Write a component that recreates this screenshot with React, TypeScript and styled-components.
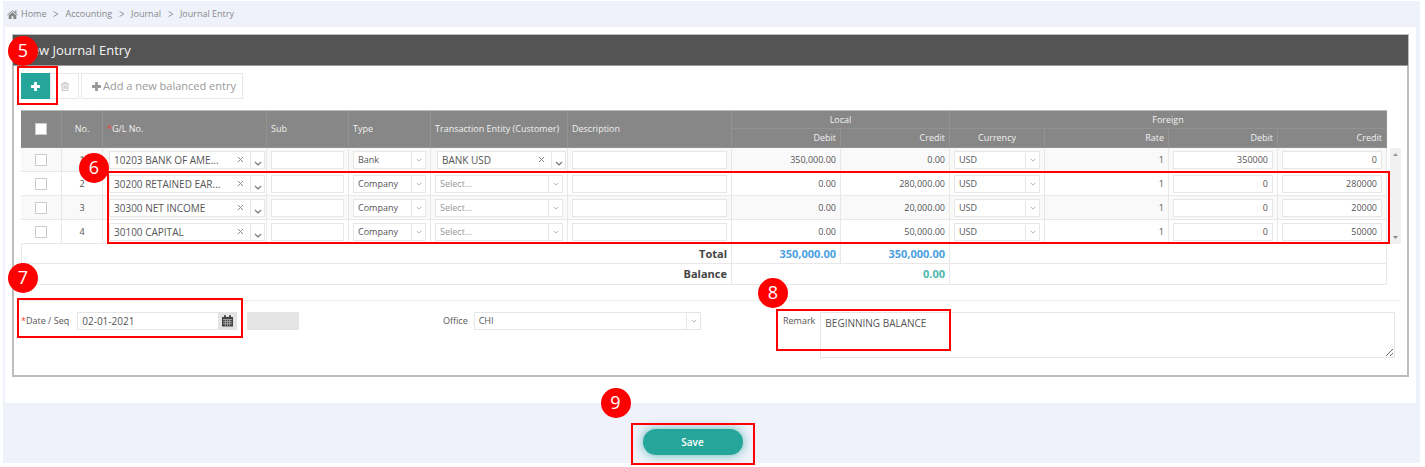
import React from "react";
import styled, { createGlobalStyle, css } from "styled-components";

const GlobalStyle = createGlobalStyle`
  *, *::before, *::after { box-sizing: border-box; }
  body {
    margin: 0;
    background: #fff;
    color: #555;
    font-family: "Open Sans", "Noto Sans", sans-serif;
    font-size: 9px;
    line-height: 14px;
  }
  button, input, select, textarea {
    margin: 0;
    font: inherit;
    color: inherit;
  }
`;

const Page = styled.div`
  margin: 1px 5px 4px 3px;
  background: #eff2fb;
`;

const Breadcrumb = styled.nav`
  display: flex;
  align-items: center;
  height: 26px;
  padding-left: 4px;
  color: #888;
`;

const Crumb = styled.a`
  display: flex;
  align-items: center;
  gap: 3px;
  color: inherit;
  text-decoration: none;
`;

const CrumbArrow = styled.svg`
  width: 6px;
  height: 6px;
  margin: 0 6px 0 7px;
  fill: none;
  stroke: #999;
`;

const Sheet = styled.main`
  margin: 0 4px 0 2px;
  padding: 7px 7px 26px;
  background: #fff;
`;

const Panel = styled.section`
  border: 2px solid #bdbdbd;
  border-top-width: 1px;
`;

const PanelTitle = styled.h1`
  margin: 0 -1px;
  height: 31px;
  padding: 0 9px;
  border-bottom: 1px solid #999;
  background: #545454;
  color: #f4f4f4;
  font-size: 13px;
  font-weight: 400;
  line-height: 30px;
`;

const PanelBody = styled.div`
  padding: 7px 6px 17px 7px;
`;

const Toolbar = styled.div`
  display: flex;
  position: relative;
  margin-bottom: 11px;
`;

const ToolButton = styled.button<{ $primary?: boolean; $wide?: boolean }>`
  display: flex;
  align-items: center;
  justify-content: center;
  gap: 2px;
  width: ${(p) => (p.$wide ? "auto" : "29px")};
  height: 26px;
  margin-left: ${(p) => (p.$wide ? "2px" : "0")};
  padding: ${(p) => (p.$wide ? "0 6px 0 10px" : "0")};
  border: 1px solid ${(p) => (p.$primary ? "#26a69a" : "#e8e8e8")};
  background: ${(p) => (p.$primary ? "#26a69a" : "#fff")};
  color: ${(p) => (p.$primary ? "#fff" : "#999")};
  font-size: 11px;
`;

const Grid = styled.div`
  display: flex;
  position: relative;
  gap: 3px;
`;

const Table = styled.table`
  flex: 1;
  min-width: 0;
  table-layout: fixed;
  border-collapse: separate;
  border-spacing: 0;
  border-top: 1px solid #bbb;
`;

const HeadCell = styled.th<{ $align?: string; $lower?: boolean }>`
  height: ${(p) => (p.$lower ? "19px" : "18px")};
  padding: 0 4px;
  border-right: 1px solid #929292;
  border-bottom: 1px solid #929292;
  background: #878787;
  color: #f0f0f0;
  font-weight: 400;
  text-align: ${(p) => p.$align || "left"};
  white-space: nowrap;
`;

const Row = styled.tr`
  background: #fff;
  &:nth-child(odd) { background: #f9f9f9; }
`;

const Cell = styled.td<{ $align?: string; $field?: "plain" | "clearable" }>`
  height: 24px;
  padding: ${(p) => (p.$field === "clearable" ? "0 1px 0 6px" : "0 4px")};
  border-right: 1px solid #e8e8e8;
  border-bottom: 1px solid #e8e8e8;
  text-align: ${(p) => p.$align || "left"};
  line-height: 12px;
`;

const SumCell = styled.td<{ $color?: string; $last?: boolean }>`
  height: ${(p) => (p.$last ? "21px" : "20px")};
  padding: 0 4px;
  border-right: 1px solid #e8e8e8;
  border-bottom: 1px solid #e8e8e8;
  background: #fff;
  color: ${(p) => p.$color || "#444"};
  font-size: 11px;
  font-weight: 700;
  text-align: right;
`;

const SumLabel = styled(SumCell)`
  border-left: 1px solid #e8e8e8;
`;

const Tick = styled.input.attrs({ type: "checkbox" })`
  appearance: none;
  display: block;
  width: 12px;
  height: 12px;
  margin: 0 auto;
  border: 1px solid #ccc;
  background: #fff;
`;

const fieldBox = css`
  border: 1px solid #e6e6e6;
  border-radius: 0;
  background: #fff;
  outline: none;
`;

const TextInput = styled.input<{ $right?: boolean }>`
  ${fieldBox}
  display: block;
  width: 100%;
  height: 18px;
  padding: 0 4px;
  text-align: ${(p) => (p.$right ? "right" : "left")};
`;

const SelectBox = styled.div<{ $muted?: boolean }>`
  ${fieldBox}
  display: flex;
  width: 100%;
  height: 18px;
  color: ${(p) => (p.$muted ? "#999" : "inherit")};
`;

const NativeSelect = styled.select<{ $large?: boolean }>`
  appearance: none;
  flex: 1;
  min-width: 0;
  height: 16px;
  padding: 0 0 0 4px;
  border: 0;
  background: transparent;
  font-size: ${(p) => (p.$large ? "10px" : "9px")};
  outline: none;
`;

const ClearButton = styled.button`
  display: flex;
  align-items: center;
  justify-content: center;
  width: 19px;
  height: 16px;
  padding: 0;
  border: 0;
  background: transparent;
`;

const ArrowSlot = styled.span<{ $low?: boolean }>`
  display: flex;
  align-items: ${(p) => (p.$low ? "flex-end" : "center")};
  justify-content: center;
  width: 14px;
  height: 16px;
  padding-bottom: ${(p) => (p.$low ? "2px" : "0")};
  border-left: 1px solid #e6e6e6;
`;

const ScrollTrack = styled.div`
  display: flex;
  flex-direction: column;
  justify-content: space-between;
  align-items: center;
  width: 11px;
  height: 96px;
  margin-top: 38px;
  padding: 5px 0;
  background: #f1f1f1;
`;

const Required = styled.span`
  color: #f44336;
`;

const Divider = styled.hr`
  margin: 15px 0 11px;
  border: 0;
  border-top: 1px solid #eee;
`;

const Form = styled.div`
  display: grid;
  grid-template-columns: 422fr 340fr 612fr;
  padding-right: 6px;
`;

const FormItem = styled.div<{ $trail?: number }>`
  display: flex;
  align-items: flex-start;
  position: relative;
  padding-right: ${(p) => p.$trail || 0}px;
`;

const Label = styled.label<{ $gap: number }>`
  flex: none;
  margin-right: ${(p) => p.$gap}px;
  line-height: 17px;
`;

const DateInput = styled(TextInput)`
  width: 141px;
  border-right: 0;
  font-size: 10px;
`;

const CalendarButton = styled.button`
  display: flex;
  align-items: center;
  justify-content: center;
  width: 19px;
  height: 18px;
  padding: 0;
  border: 0;
  background: #e4e4e4;
`;

const SeqInput = styled(TextInput)`
  width: 52px;
  margin-left: 10px;
  border-color: #e4e4e4;
  background: #e4e4e4;
`;

const RemarkArea = styled.textarea`
  ${fieldBox}
  flex: 1;
  min-width: 0;
  height: 46px;
  padding: 3px 4px;
  font-size: 10px;
  resize: vertical;
`;

const Footer = styled.footer`
  display: flex;
  justify-content: center;
  padding: 26px 38px 8px 0;
`;

const SaveWrap = styled.div`
  position: relative;
`;

const SaveButton = styled.button`
  display: block;
  width: 100px;
  height: 26px;
  border: 0;
  border-radius: 13px;
  background: #26a69a;
  box-shadow: 0 0 10px 1px rgba(38, 166, 154, 0.6);
  color: #fff;
  font-size: 10px;
  font-weight: 600;
`;

/* Walk-through marks that lie over the form. */
const Frame = styled.div<{ $top: number; $left: number; $right?: number; $width?: number; $height: number }>`
  position: absolute;
  z-index: 2;
  top: ${(p) => p.$top}px;
  left: ${(p) => p.$left}px;
  ${(p) => (p.$width ? `width: ${p.$width}px;` : `right: ${p.$right}px;`)}
  height: ${(p) => p.$height}px;
  border: 2px solid #f00;
  pointer-events: none;
`;

const Badge = styled.span<{ $top: number; $left: number }>`
  position: absolute;
  z-index: 3;
  top: ${(p) => p.$top}px;
  left: ${(p) => p.$left}px;
  width: 30px;
  height: 30px;
  border-radius: 50%;
  background: #f00;
  color: #fff;
  font-size: 18px;
  font-weight: 400;
  line-height: 29px;
  text-align: center;
`;

const HomeIcon = () => (
  <svg width="11" height="9" viewBox="0 0 11 9" aria-hidden="true">
    <path fill="#888" d="M5.5 2.2 L9.3 5.3 V9 H6.4 V6.2 H4.6 V9 H1.7 V5.3z" />
    <path fill="none" stroke="#888" strokeWidth="1" d="M0.4 5 L5.5 0.8 L10.6 5" />
    <path fill="#888" d="M8 0.6 h1.4 v3 L8 2.4z" />
  </svg>
);

const PlusIcon = () => (
  <svg width="9" height="9" viewBox="0 0 9 9" fill="currentColor" aria-hidden="true">
    <path d="M3.7 0h1.6q.6 0 .6.6v2.5h2.5q.6 0 .6.6v1.6q0 .6-.6.6H5.9v2.5q0 .6-.6.6H3.7q-.6 0-.6-.6V5.9H.6q-.6 0-.6-.6V3.7q0-.6.6-.6h2.5V.6q0-.6.6-.6z" />
  </svg>
);

const TrashIcon = () => (
  <svg width="8" height="9" viewBox="0 0 8 9" fill="none" stroke="#b5b5b5" aria-hidden="true">
    <path d="M0 2h8M2.7 2V.7h2.6V2M1 2v6.4h6V2M2.9 3.6v3.3M4 3.6v3.3M5.1 3.6v3.3" strokeWidth="0.8" />
  </svg>
);

const Chevron = ({ dark }: { dark?: boolean }) => (
  <svg width={dark ? 8 : 6} height={dark ? 5 : 4} viewBox="0 0 8 5" fill="none" stroke={dark ? "#777" : "#aaa"} strokeWidth="1.2" aria-hidden="true">
    <path d="M1 1 L4 4 L7 1" />
  </svg>
);

const Cross = () => (
  <svg width="7" height="7" viewBox="0 0 7 7" stroke="#888" aria-hidden="true">
    <path d="M1 1 L6 6 M6 1 L1 6" />
  </svg>
);

const CalendarIcon = () => (
  <svg width="11" height="12" viewBox="0 0 11 12" aria-hidden="true">
    <path fill="#444" d="M0 2h2V1a1 1 0 0 1 2 0v1h3V1a1 1 0 0 1 2 0v1h2v9.5H0z" />
    <path stroke="#ccc" strokeWidth="0.6" d="M1 4.5h9M1 6.6h9M1 8.7h9M3.3 4.5v6.3M5.5 4.5v6.3M7.7 4.5v6.3" />
  </svg>
);

interface DropProps {
  label: string;
  value: string;
  clearable?: boolean;
  id?: string;
}

function Drop({ label, value, clearable, id }: DropProps) {
  return (
    <SelectBox $muted={value === "Select..."}>
      <NativeSelect id={id} aria-label={id ? undefined : label} $large={clearable} defaultValue={value}>
        <option>{value}</option>
      </NativeSelect>
      {clearable && (
        <ClearButton type="button" aria-label={`Clear ${label}`}>
          <Cross />
        </ClearButton>
      )}
      <ArrowSlot $low={clearable}>
        <Chevron dark={clearable} />
      </ArrowSlot>
    </SelectBox>
  );
}

const columns = [41, 41, 164, 82, 82, 137, 164, 109, 109, 95, 124, 109, 109];

const entries = [
  { gl: "10203 BANK OF AME...", type: "Bank", entity: "BANK USD", debit: "350,000.00", credit: "0.00", fDebit: "350000", fCredit: "0" },
  { gl: "30200 RETAINED EAR...", type: "Company", entity: "", debit: "0.00", credit: "280,000.00", fDebit: "0", fCredit: "280000" },
  { gl: "30300 NET INCOME", type: "Company", entity: "", debit: "0.00", credit: "20,000.00", fDebit: "0", fCredit: "20000" },
  { gl: "30100 CAPITAL", type: "Company", entity: "", debit: "0.00", credit: "50,000.00", fDebit: "0", fCredit: "50000" },
];

const crumbs = ["Home", "Accounting", "Journal", "Journal Entry"];

export default function App() {
  return (
    <>
      <GlobalStyle />
      <Page>
        <Breadcrumb aria-label="Breadcrumb">
          {crumbs.map((name, i) => (
            <React.Fragment key={name}>
              {i > 0 && (
                <CrumbArrow viewBox="0 0 6 6" aria-hidden="true">
                  <path d="M0.5 0.5 L5 3 L0.5 5.5" />
                </CrumbArrow>
              )}
              <Crumb href="#">
                {i === 0 && <HomeIcon />}
                {name}
              </Crumb>
            </React.Fragment>
          ))}
        </Breadcrumb>

        <Sheet>
          <Panel>
            <PanelTitle>New Journal Entry</PanelTitle>
            <PanelBody>
              <Toolbar>
                <ToolButton type="button" $primary aria-label="Add entry">
                  <PlusIcon />
                </ToolButton>
                <ToolButton type="button" aria-label="Delete entry">
                  <TrashIcon />
                </ToolButton>
                <ToolButton type="button" $wide>
                  <PlusIcon />
                  Add a new balanced entry
                </ToolButton>
                <Frame $top={-7} $left={-4} $width={41} $height={39} />
                <Badge $top={-37} $left={-13}>5</Badge>
              </Toolbar>

              <Grid>
                <Table>
                  <colgroup>
                    {columns.map((w, i) => (
                      <col key={i} width={w} />
                    ))}
                  </colgroup>
                  <thead>
                    <tr>
                      <HeadCell rowSpan={2}><Tick aria-label="Select all entries" /></HeadCell>
                      <HeadCell rowSpan={2} $align="center">No.</HeadCell>
                      <HeadCell rowSpan={2}><Required>*</Required>G/L No.</HeadCell>
                      <HeadCell rowSpan={2}>Sub</HeadCell>
                      <HeadCell rowSpan={2}>Type</HeadCell>
                      <HeadCell rowSpan={2}>Transaction Entity (Customer)</HeadCell>
                      <HeadCell rowSpan={2}>Description</HeadCell>
                      <HeadCell colSpan={2} $align="center">Local</HeadCell>
                      <HeadCell colSpan={4} $align="center">Foreign</HeadCell>
                    </tr>
                    <tr>
                      <HeadCell $lower $align="right">Debit</HeadCell>
                      <HeadCell $lower $align="right">Credit</HeadCell>
                      <HeadCell $lower $align="center">Currency</HeadCell>
                      <HeadCell $lower $align="right">Rate</HeadCell>
                      <HeadCell $lower $align="right">Debit</HeadCell>
                      <HeadCell $lower $align="right">Credit</HeadCell>
                    </tr>
                  </thead>
                  <tbody>
                    {entries.map((e, i) => (
                      <Row key={e.gl}>
                        <Cell><Tick aria-label={`Select entry ${i + 1}`} /></Cell>
                        <Cell $align="center">{i + 1}</Cell>
                        <Cell $field="clearable"><Drop label="G/L No." value={e.gl} clearable /></Cell>
                        <Cell><TextInput aria-label="Sub" /></Cell>
                        <Cell><Drop label="Type" value={e.type} /></Cell>
                        <Cell $field={e.entity ? "clearable" : "plain"}>
                          <Drop label="Transaction Entity" value={e.entity || "Select..."} clearable={!!e.entity} />
                        </Cell>
                        <Cell><TextInput aria-label="Description" /></Cell>
                        <Cell $align="right">{e.debit}</Cell>
                        <Cell $align="right">{e.credit}</Cell>
                        <Cell><Drop label="Currency" value="USD" /></Cell>
                        <Cell $align="right">1</Cell>
                        <Cell><TextInput aria-label="Foreign debit" $right defaultValue={e.fDebit} /></Cell>
                        <Cell><TextInput aria-label="Foreign credit" $right defaultValue={e.fCredit} /></Cell>
                      </Row>
                    ))}
                  </tbody>
                  <tfoot>
                    <tr>
                      <SumLabel colSpan={7}>Total</SumLabel>
                      <SumCell $color="#4a9fe0">350,000.00</SumCell>
                      <SumCell $color="#4a9fe0">350,000.00</SumCell>
                      <SumCell colSpan={4} />
                    </tr>
                    <tr>
                      <SumLabel colSpan={7} $last>Balance</SumLabel>
                      <SumCell colSpan={2} $color="#4db6ac" $last>0.00</SumCell>
                      <SumCell colSpan={4} $last />
                    </tr>
                  </tfoot>
                </Table>
                <ScrollTrack aria-hidden="true">
                  <svg width="5" height="3" viewBox="0 0 5 3" fill="#999"><path d="M0 3 L2.5 0 L5 3z" /></svg>
                  <svg width="5" height="3" viewBox="0 0 5 3" fill="#888"><path d="M0 0 L2.5 3 L5 0z" /></svg>
                </ScrollTrack>
                <Frame $top={61} $left={86} $right={11} $height={73} />
                <Badge $top={43} $left={58}>6</Badge>
              </Grid>

              <Divider />

              <Form>
                <FormItem>
                  <Label htmlFor="entry-date" $gap={8}><Required>*</Required>Date / Seq</Label>
                  <DateInput id="entry-date" defaultValue="02-01-2021" />
                  <CalendarButton type="button" aria-label="Open calendar"><CalendarIcon /></CalendarButton>
                  <SeqInput aria-label="Sequence" disabled />
                  <Frame $top={-14} $left={-4} $width={226} $height={40} />
                  <Badge $top={-49} $left={-13}>7</Badge>
                </FormItem>
                <FormItem $trail={82}>
                  <Label htmlFor="office" $gap={6}>Office</Label>
                  <Drop id="office" label="Office" value="CHI" />
                </FormItem>
                <FormItem>
                  <Label htmlFor="remark" $gap={5}>Remark</Label>
                  <RemarkArea id="remark" defaultValue="BEGINNING BALANCE" />
                  <Frame $top={-3} $left={-7} $width={175} $height={42} />
                  <Badge $top={-34} $left={-25}>8</Badge>
                </FormItem>
              </Form>
            </PanelBody>
          </Panel>
        </Sheet>

        <Footer>
          <SaveWrap>
            <SaveButton type="button">Save</SaveButton>
            <Frame $top={-6} $left={-12} $width={124} $height={42} />
            <Badge $top={-41} $left={-42}>9</Badge>
          </SaveWrap>
        </Footer>
      </Page>
    </>
  );
}
